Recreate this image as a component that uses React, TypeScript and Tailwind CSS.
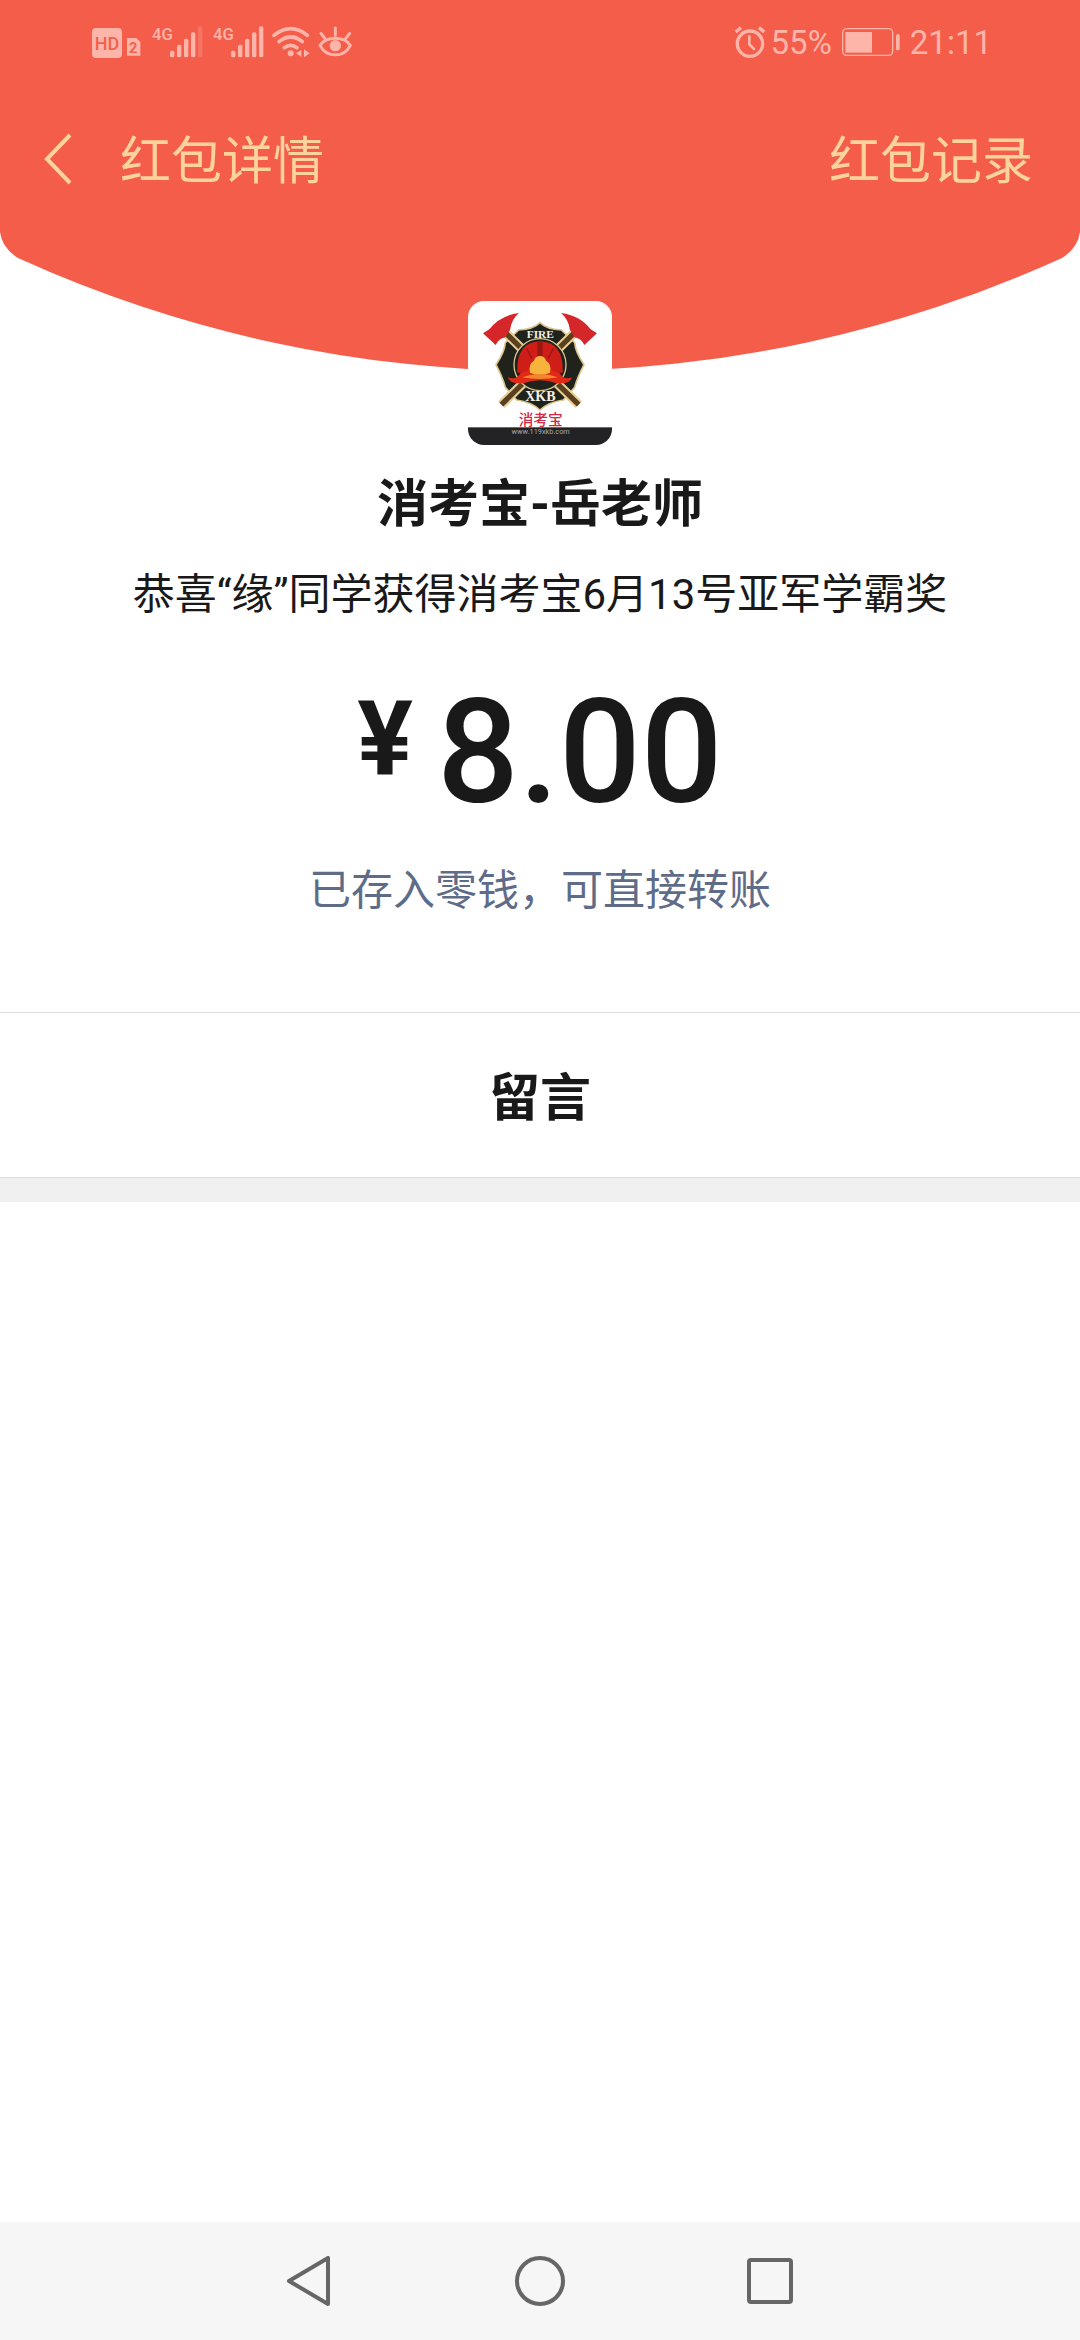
import React from 'react';

const SIGNAL_BARS = [
  { x: 54, y: 122, h: 20 },
  { x: 75, y: 104, h: 38 },
  { x: 96, y: 86, h: 56 },
  { x: 117, y: 67, h: 75 },
  { x: 138, y: 49, h: 93 }
];

function HdIcon() {
  return (
    <svg viewBox="36 45 156 102" className="w-[52px] h-[34px]" aria-label="HD 2">
      <rect x="36" y="54" width="90" height="90" rx="12" fill="#fdb5a9" />
      <text x="81" y="119" textAnchor="middle" fontSize="54" fontWeight="500" fill="#f2604c">HD</text>
      <path d="M141 84h28l12 12v41h-40z" fill="#fdb5a9" />
      <text x="160" y="128" textAnchor="middle" fontSize="44" fontWeight="700" fill="#f2604c">2</text>
    </svg>
  );
}

function SignalIcon({ bars, className }: { bars: number; className: string }) {
  return (
    <svg viewBox="0 45 153 102" preserveAspectRatio="xMinYMid meet" className={className} aria-label="4G">
      <text x="0" y="91" fontSize="50" fontWeight="500" fill="#fdb5a9">4G</text>
      {SIGNAL_BARS.map((bar, i) => (
        <rect key={bar.x} x={bar.x} y={bar.y} width="13" height={bar.h} rx="5" fill="#fdb5a9" opacity={i < bars ? 1 : 0.25} />
      ))}
    </svg>
  );
}

function WifiIcon() {
  return (
    <svg viewBox="576 45 114 102" className="w-[38px] h-[34px]" fill="none" stroke="#fdb5a9" strokeWidth="11" strokeLinecap="round">
      <path d="M582 76Q632 36 682 76" />
      <path d="M597 95Q632 67 667 95" />
      <path d="M613 113Q632 99 651 113" />
      <circle cx="632" cy="130" r="9" fill="#fdb5a9" stroke="none" />
      <path d="M664 120v20l-16-10zM672 118v24l17-12z" fill="#fdb5a9" stroke="none" />
    </svg>
  );
}

function EyeIcon() {
  return (
    <svg viewBox="714 45 102 102" className="w-[34px] h-[34px]" fill="none" stroke="#fdb5a9" strokeWidth="9" strokeLinecap="round">
      <path d="M720 106C740 78 792 78 811 106C792 144 740 144 720 106Z" strokeLinejoin="round" />
      <circle cx="766" cy="107" r="17" fill="#fdb5a9" stroke="none" />
      <path d="M766 54v22M723 70l12 16M809 70l-12 16" />
    </svg>
  );
}

function AlarmIcon() {
  return (
    <svg viewBox="63 45 102 102" className="w-[34px] h-[34px]" fill="none" stroke="#fdb5a9" strokeWidth="10" strokeLinecap="round">
      <circle cx="114" cy="101" r="38" />
      <path d="M71 66l16-13M157 66l-16-13" strokeLinecap="butt" />
      <path d="M112 79v24l14 14" strokeWidth="8" />
    </svg>
  );
}

function BatteryIcon() {
  return (
    <svg viewBox="393 45 174 102" className="w-[58px] h-[34px]">
      <rect x="395" y="56" width="150" height="80" rx="12" fill="none" stroke="#fdb5a9" strokeWidth="4" />
      <rect x="403" y="66" width="80" height="62" fill="#fdb5a9" />
      <rect x="555" y="73" width="11" height="48" rx="4" fill="#fdb5a9" />
    </svg>
  );
}

function Avatar() {
  return (
    <svg viewBox="54 33 432 432" className="relative w-36 h-36 rounded-2xl bg-white" role="img" aria-label="消考宝">
      {/* Shield */}
      <path
        d="M270 98Q290 118 334 120L374 158Q376 186 402 224Q382 262 374 292L340 330Q296 336 270 360Q244 336 200 330L166 292Q158 262 138 224Q164 186 166 158L206 120Q250 118 270 98Z"
        fill="#20231c"
        stroke="#d9c48c"
        strokeWidth="5"
      />
      {/* Axes */}
      <path d="M160 122L386 344M380 122L154 344" stroke="#e6cf94" strokeWidth="28" />
      <path d="M160 122L386 344M380 122L154 344" stroke="#5b4020" strokeWidth="16" />
      <path d="M99 130L118 118Q150 76 207 69Q184 88 181 118L166 142Q146 146 137 165Z" fill="#d5262a" />
      <path d="M441 130L422 118Q390 76 333 69Q356 88 359 118L374 142Q394 146 403 165Z" fill="#d5262a" />
      {/* Helmet */}
      <circle cx="270" cy="224" r="78" fill="#20231c" stroke="#d9c48c" strokeWidth="4" />
      <path d="M202 248Q198 156 270 154Q342 156 338 248Z" fill="#cf1d18" />
      <path d="M264 158h12v42h-12zM230 176l16 30M310 176l-16 30" fill="#9c1612" stroke="#9c1612" strokeWidth="4" />
      <path d="M174 262Q200 272 212 248Q270 226 328 248Q342 272 366 262Q360 284 320 280Q270 262 220 280Q180 284 174 262Z" fill="#e02a17" />
      <path d="M240 248Q234 222 252 212Q256 198 270 198Q284 198 288 212Q306 222 300 248Q270 262 240 248Z" fill="#f7b33c" />
      <path d="M216 262Q270 242 324 262Q270 272 216 262Z" fill="#f3872a" />
      <text x="271" y="145" textAnchor="middle" fontSize="34" fontWeight="700" fill="#f4f0e4" className="font-['Liberation_Serif',serif]">FIRE</text>
      <text x="271" y="334" textAnchor="middle" fontSize="42" fontWeight="700" fill="#f4f0e4" className="font-['Liberation_Serif',serif]">XKB</text>
      <text x="272" y="404" textAnchor="middle" fontSize="44" fontWeight="500" fill="#cf2a45">消考宝</text>
      <rect x="54" y="412" width="432" height="53" fill="#232326" />
      <text x="272" y="431" textAnchor="middle" fontSize="22" fill="#a9a9ac">www.119xkb.com</text>
    </svg>
  );
}

export default function App() {
  return (
    <div className="min-h-screen flex flex-col bg-white text-[#191919] font-['Roboto','Noto_Sans_CJK_SC',sans-serif]">
      <header className="relative h-[372px]">
        {/* Curved backdrop */}
        <svg viewBox="0 0 1080 372" preserveAspectRatio="none" className="absolute inset-0 w-full h-full" aria-hidden="true">
          <path d="M0 0H1080V232Q1078 248 1062 258A1262 1262 0 0 1 18 258Q2 248 0 232Z" fill="#f55d4b" />
        </svg>

        <div className="relative h-[84px] pl-[92px] pr-[88px] flex items-center justify-between text-[#fdb5a9]">
          <div className="flex items-center gap-2">
            <HdIcon />
            <SignalIcon bars={4} className="w-[53px] h-[34px]" />
            <SignalIcon bars={5} className="w-[51px] h-[34px]" />
            <WifiIcon />
            <EyeIcon />
          </div>
          <div className="flex items-center text-[33px] leading-10">
            <AlarmIcon />
            <span className="pt-0.5 ml-1">55%</span>
            <span className="ml-2.5 mr-2.5"><BatteryIcon /></span>
            <time className="pt-0.5">21:11</time>
          </div>
        </div>

        <nav className="relative h-[150px] pl-[44px] pr-[47px] flex items-center text-[51px] text-[#fcd39c]">
          <button type="button" aria-label="返回" className="mr-12">
            <svg viewBox="0 0 28 52" className="w-7 h-[52px]" fill="none" stroke="currentColor" strokeWidth="4">
              <path d="M26 2L3 26L26 50" />
            </svg>
          </button>
          <h1 className="pt-1.5">红包详情</h1>
          <a href="#records" className="ml-auto pt-1.5">红包记录</a>
        </nav>
      </header>

      <main className="flex-1">
        <section className="-mt-[71px] h-[712px] flex flex-col items-center border-b border-[#dcdcdc]">
          <Avatar />
          <h2 className="mt-6 text-[51px] leading-[72px] font-bold">消考宝-岳老师</h2>
          <p className="mt-6 text-[42px] leading-[60px]">恭喜“缘”同学获得消考宝6月13号亚军学霸奖</p>
          <p className="mt-14 flex items-start font-medium">
            <span className="mr-6 text-[104px] leading-[116px] font-bold">¥</span>
            <span className="text-[144px] leading-[144px]">8.00</span>
          </p>
          <a href="#balance" className="mt-9 text-[42px] leading-[60px] text-[#5f6c88]">已存入零钱，可直接转账</a>
        </section>

        <section className="h-[165px] pt-2 flex items-center justify-center border-b border-[#dcdcdc]">
          <h3 className="text-[51px] font-bold">留言</h3>
        </section>
        <div className="h-6 bg-[#f0f0f0]" />
      </main>

      <footer className="h-[118px] flex items-center justify-center gap-[180px] bg-[#f6f6f6] text-[#666666]">
        <button type="button" aria-label="Back">
          <svg viewBox="0 0 50 50" className="w-[50px] h-[50px]" fill="none" stroke="currentColor" strokeWidth="4" strokeLinejoin="round">
            <path d="M43 2V48L4 25Z" />
          </svg>
        </button>
        <button type="button" aria-label="Home">
          <svg viewBox="0 0 50 50" className="w-[50px] h-[50px]" fill="none" stroke="currentColor" strokeWidth="4">
            <circle cx="25" cy="25" r="23" />
          </svg>
        </button>
        <button type="button" aria-label="Recent apps">
          <svg viewBox="0 0 50 50" className="w-[50px] h-[50px]" fill="none" stroke="currentColor" strokeWidth="4">
            <rect x="4" y="4" width="42" height="42" rx="2" />
          </svg>
        </button>
      </footer>
    </div>
  );
}
